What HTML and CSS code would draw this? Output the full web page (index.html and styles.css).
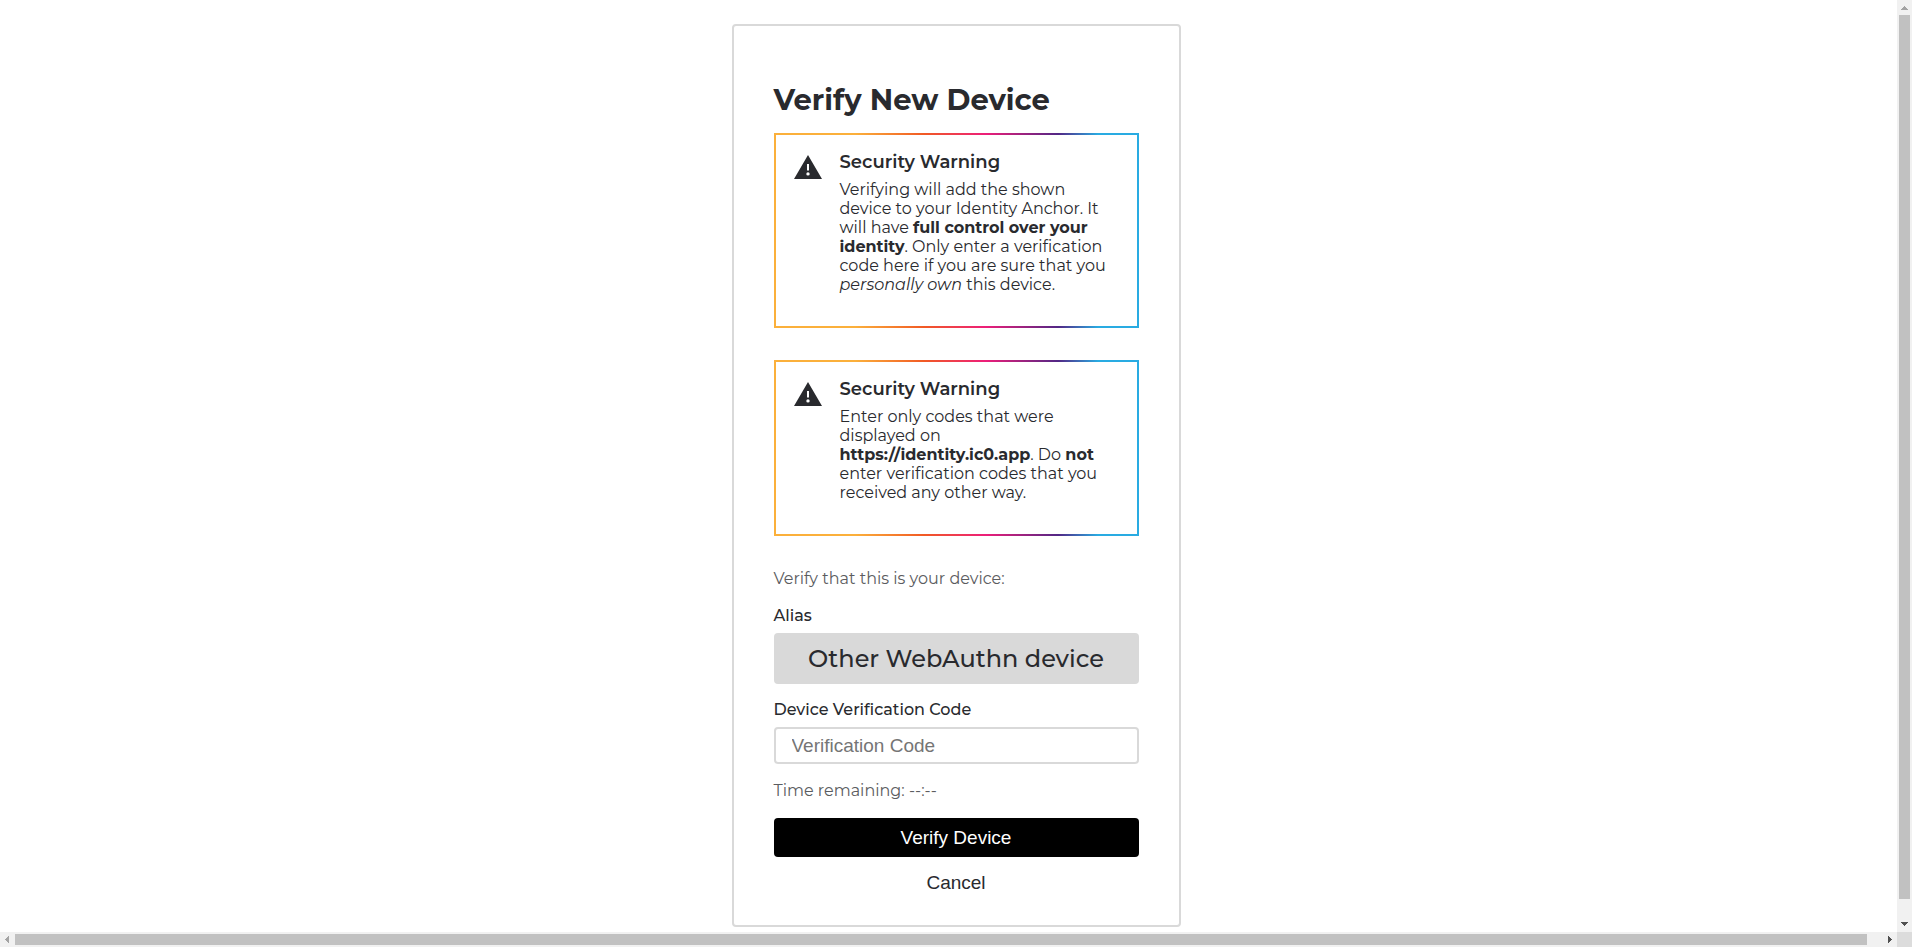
FILE: index.html
```html
<!DOCTYPE html>
<html lang="en">
<head>
<meta charset="utf-8">
<title>Verify New Device</title>
<link rel="stylesheet" href="styles.css">
</head>
<body>
<div class="window">
  <div class="viewport">
    <main class="page">
      <section class="card">
        <h1 class="title">Verify New Device</h1>

        <aside class="warning">
          <svg class="warning-icon" viewBox="0 0 28 24" aria-hidden="true"><path fill-rule="evenodd" d="M14 0 28 24H0ZM13 9v6.500h2V9ZM14 17.200a1.700 1.700 0 1 0 0 3.400 1.700 1.700 0 0 0 0-3.400Z"/></svg>
          <div class="warning-body">
            <h2 class="warning-title">Security Warning</h2>
            <p class="warning-text">Verifying will add the shown device to your Identity Anchor. It will have <strong>full control over your identity</strong>. Only enter a verification code here if you are sure that you <em>personally own</em> this device.</p>
          </div>
        </aside>

        <aside class="warning">
          <svg class="warning-icon" viewBox="0 0 28 24" aria-hidden="true"><path fill-rule="evenodd" d="M14 0 28 24H0ZM13 9v6.500h2V9ZM14 17.200a1.700 1.700 0 1 0 0 3.400 1.700 1.700 0 0 0 0-3.400Z"/></svg>
          <div class="warning-body">
            <h2 class="warning-title">Security Warning</h2>
            <p class="warning-text">Enter only codes that were displayed on <strong>https://identity.ic0.app</strong>. Do <strong>not</strong> enter verification codes that you received any other way.</p>
          </div>
        </aside>

        <p class="note">Verify that this is your device:</p>

        <form class="form">
          <div class="field">
            <h3 class="label">Alias</h3>
            <div class="alias">Other WebAuthn device</div>
          </div>
          <div class="field">
            <label class="label" for="code">Device Verification Code</label>
            <input class="input" id="code" type="text" placeholder="Verification Code">
          </div>
          <p class="note">Time remaining: <span>--:--</span></p>
          <div class="actions">
            <button class="button primary" type="submit">Verify Device</button>
            <button class="button" type="button">Cancel</button>
          </div>
        </form>
      </section>
    </main>
  </div>
  <div class="bar vertical" aria-hidden="true">
    <svg class="arrow muted" viewBox="0 0 15 15"><path d="M7 6h1v1h1v1h1v1h1v1H4V9h1V8h1V7h1z"/></svg>
    <div class="track"><div class="thumb"></div></div>
    <svg class="arrow" viewBox="0 0 15 15"><path d="M4 5h7v1h-1v1H9v1H8v1H7V8H6V7H5V6H4z"/></svg>
  </div>
  <div class="bar horizontal" aria-hidden="true">
    <svg class="arrow muted" viewBox="0 0 15 15"><path d="M9 4v7H8v-1H7V9H6V8H5V7h1V6h1V5h1V4z"/></svg>
    <div class="track"><div class="thumb"></div></div>
    <svg class="arrow" viewBox="0 0 15 15"><path d="M6 4v7h1v-1h1V9h1V8h1V7H9V6H8V5H7V4z"/></svg>
  </div>
  <div class="corner"></div>
</div>
</body>
</html>
```
FILE: styles.css
```css
* { box-sizing: border-box; }

body {
  margin: 0;
  background: #fff;
  color: #292a2e;
  font-family: Montserrat, Inter, sans-serif;
  font-size: 16px;
  line-height: 19px;
}

h1, h2, h3, p { margin: 0; }

.window {
  display: grid;
  grid-template: minmax(0, 1fr) 15px / minmax(0, 1fr) 15px;
  height: 100vh;
}

.viewport { overflow: hidden; }

.page {
  display: flex;
  justify-content: center;
  min-width: 100vw;
  padding: 24px 0;
}

.card {
  display: flex;
  flex-direction: column;
  width: 100%;
  max-width: 449px;
  padding: 56px 40px 23px;
  border: 2px solid #d9d9d9;
  border-radius: 4px;
}

.title {
  margin-bottom: 15px;
  font-size: 29px;
  font-weight: 700;
  line-height: 36px;
}

.warning {
  display: flex;
  gap: 18px;
  margin-bottom: 32px;
  padding: 16px 18px 32px;
  border: 2px solid;
  border-image: linear-gradient(90deg, #fbb03b 22%, #f15a24 41%, #ed1e79 58%, #522785 78%, #29abe2 89%) 1;
}

.warning-icon {
  flex: none;
  width: 28px;
  height: 24px;
  margin-top: 4px;
  fill: #292a2e;
}

.warning-title {
  margin-bottom: 7px;
  font-size: 18px;
  font-weight: 600;
  line-height: 22px;
}

.warning-text strong { font-weight: 700; }

.note {
  color: #5b5c60;
  line-height: 21px;
}

.form {
  display: flex;
  flex-direction: column;
  gap: 16px;
  margin-top: 17px;
}

.field {
  display: flex;
  flex-direction: column;
  gap: 8px;
}

.label {
  font-size: 16px;
  font-weight: 500;
}

.alias {
  padding: 10px;
  border-radius: 4px;
  background: #d9d9d9;
  font-size: 24px;
  font-weight: 500;
  line-height: 31px;
  text-align: center;
}

.input {
  width: 100%;
  height: 37px;
  padding: 0 16px;
  border: 2px solid #d9d9d9;
  border-radius: 4px;
  background: #fff;
  color: #292a2e;
  font: 19px "Liberation Sans", Arial, sans-serif;
}

.input::placeholder { color: #757575; }

.actions {
  display: flex;
  flex-direction: column;
  gap: 6px;
  margin-top: 1px;
}

.button {
  height: 39px;
  border: 0;
  border-radius: 4px;
  background: transparent;
  color: #292a2e;
  font: 19px "Liberation Sans", Arial, sans-serif;
}

.primary {
  background: #000;
  color: #fff;
}

.bar {
  display: flex;
  background: #f1f1f1;
}

.vertical { flex-direction: column; }

.arrow {
  flex: none;
  width: 15px;
  height: 15px;
  fill: #505050;
}

.muted { fill: #a3a3a3; }

.track {
  flex: 1;
  padding: 0 2px;
}

.thumb {
  height: 98%;
  background: #c1c1c1;
}

.horizontal .track { padding: 2px 0; }

.horizontal .thumb {
  width: 99.2%;
  height: 100%;
}

.corner { background: #dcdcdc; }
```
